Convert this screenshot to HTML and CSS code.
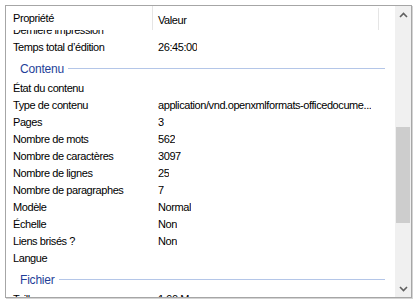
FILE: index.html
```html
<!DOCTYPE html>
<html lang="fr">
<head>
<meta charset="UTF-8">
<meta name="viewport" content="width=device-width, initial-scale=1.0">
<title>Propriétés - Détails</title>
<link rel="stylesheet" href="styles.css">
</head>
<body>
<div class="window">
    <div class="list">
        <div class="head">
            <div class="head-name">Propriété</div>
            <div class="head-value">Valeur</div>
        </div>
        <div class="rows">
            <div class="scroller">
                <div class="row"><span class="name">Dernière impression</span><span class="value"></span></div>
                <div class="row"><span class="name">Temps total d’édition</span><span class="value">26:45:00</span></div>

                <div class="group"><span class="group-title">Contenu</span><span class="group-line"></span></div>
                <div class="row"><span class="name">État du contenu</span><span class="value"></span></div>
                <div class="row"><span class="name">Type de contenu</span><span class="value">application/vnd.openxmlformats-officedocume...</span></div>
                <div class="row"><span class="name">Pages</span><span class="value">3</span></div>
                <div class="row"><span class="name">Nombre de mots</span><span class="value">562</span></div>
                <div class="row"><span class="name">Nombre de caractères</span><span class="value">3097</span></div>
                <div class="row"><span class="name">Nombre de lignes</span><span class="value">25</span></div>
                <div class="row"><span class="name">Nombre de paragraphes</span><span class="value">7</span></div>
                <div class="row"><span class="name">Modèle</span><span class="value">Normal</span></div>
                <div class="row"><span class="name">Échelle</span><span class="value">Non</span></div>
                <div class="row"><span class="name">Liens brisés ?</span><span class="value">Non</span></div>
                <div class="row"><span class="name">Langue</span><span class="value"></span></div>

                <div class="group"><span class="group-title">Fichier</span><span class="group-line"></span></div>
                <div class="row"><span class="name">Taille</span><span class="value">1,90 Mo</span></div>
            </div>
        </div>
    </div>
    <div class="scrollbar">
        <div class="arrow">
            <svg width="9" height="6" viewBox="0 0 9 6"><path d="M1 5 L4.5 1.5 L8 5" fill="none" stroke="#606060" stroke-width="1.6"/></svg>
        </div>
        <div class="track">
            <div class="thumb"></div>
        </div>
        <div class="arrow">
            <svg width="9" height="6" viewBox="0 0 9 6"><path d="M1 1 L4.5 4.5 L8 1" fill="none" stroke="#606060" stroke-width="1.6"/></svg>
        </div>
    </div>
</div>
</body>
</html>
```

FILE: styles.css
```css
body {
    margin: 0;
    padding: 5px;
    background-color: #ffffff;
    font-family: "Liberation Sans", Arial, sans-serif;
    font-size: 11px;
    letter-spacing: -0.42px;
    color: #000000;
}
.window {
    display: flex;
    width: 405px;
    height: 291px;
    border: 1px solid #a6a6a6;
    box-shadow: 1px 1px 0 #d4d4d4;
    background-color: #ffffff;
    overflow: hidden;
}
.list {
    display: flex;
    flex-direction: column;
    flex: 1;
    min-width: 0;
}
.head {
    display: flex;
    height: 24px;
    flex-shrink: 0;
}
.head-name {
    width: 139px;
    padding-left: 7px;
    line-height: 24px;
    border-right: 1px solid #e5e5e5;
}
.head-value {
    flex: 1;
    padding-left: 5px;
    line-height: 24px;
    margin: 2px 16px 0 0;
    border-right: 1px solid #e5e5e5;
}
.rows {
    flex: 1;
    overflow: hidden;
}
.scroller {
    margin-top: -8px;
}
.row {
    display: flex;
    height: 17px;
    line-height: 17px;
    white-space: nowrap;
}
.name {
    width: 139px;
    padding-left: 7px;
    flex-shrink: 0;
}
.value {
    padding-left: 6px;
    overflow: hidden;
}
.group {
    display: flex;
    align-items: center;
    gap: 4px;
    height: 24px;
    padding: 1px 10px 0 14px;
    box-sizing: border-box;
}
.group-title {
    color: #1f3f99;
    font-size: 12px;
    letter-spacing: -0.2px;
}
.group-line {
    flex: 1;
    height: 1px;
    background-color: #b4c6e8;
}
.scrollbar {
    display: flex;
    flex-direction: column;
    width: 16px;
    background-color: #f0f0f0;
}
.arrow {
    height: 17px;
    display: flex;
    align-items: center;
    justify-content: center;
}
.track {
    flex: 1;
    padding-top: 104px;
}
.thumb {
    height: 96px;
    margin: 0 1px;
    background-color: #cdcdcd;
}
```
